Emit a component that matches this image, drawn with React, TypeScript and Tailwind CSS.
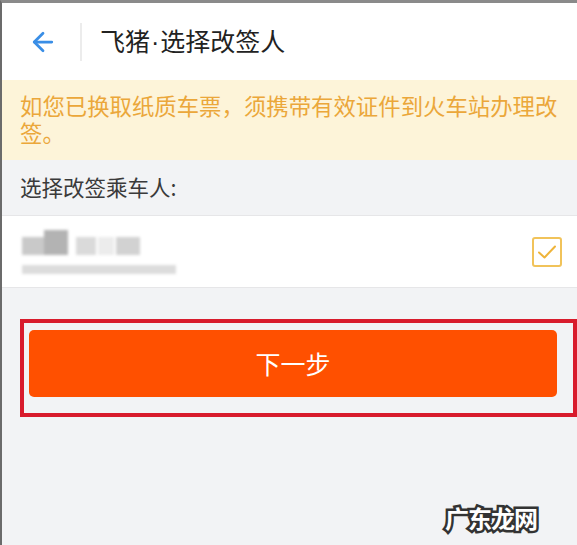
import { ArrowLeft } from "lucide-react";

const cjk = "font-['Noto_Sans_CJK_SC','Noto_Sans',sans-serif]";

const App = () => {
    return (
        <div
            className={`relative h-[545px] w-[577px] overflow-hidden bg-[#f2f3f5] border-l-2 border-t-[3px] border-l-[#6b6b6b] border-t-[#8a8a8a] ${cjk}`}
        >
            {/* header */}
            <div className="h-[77px] bg-white flex flex-row items-center">
                <div className="w-[78px] flex items-center justify-center pl-[4px]">
                    <ArrowLeft className="w-[30px] h-[30px] text-[#3a8ee6]" strokeWidth={2.2} />
                </div>
                <div className="h-[38px] w-[2px] bg-[#ececec]" />
                <div className="pl-[18px] text-[25px] leading-none text-[#222]">
                    飞猪<span className="font-['Liberation_Sans',sans-serif] px-[1px]">·</span>选择改签人
                </div>
            </div>

            {/* notice */}
            <div className="h-[80px] bg-[#fdf4d9] px-[18px] pt-[12px] text-[22.4px] leading-[27px] text-[#eba73a]">
                如您已换取纸质车票，须携带有效证件到火车站办理改签。
            </div>

            {/* label */}
            <div className="h-[55px] flex items-center px-[18px] text-[21.5px] text-[#3a3a3a]">
                选择改签乘车人:
            </div>

            {/* passenger row */}
            <div className="h-[73px] bg-white border-y border-[#e6e6e8] flex flex-row items-center justify-between pl-[20px] pr-[15px]">
                <div className="flex flex-col gap-[10px] blur-[1.5px]">
                    <div className="flex flex-row items-end gap-[8px]">
                        <div className="flex flex-row items-end">
                            <div className="w-[22px] h-[18px] bg-[#c9c9c9]" />
                            <div className="w-[24px] h-[25px] bg-[#b3b3b3]" />
                        </div>
                        <div className="flex flex-row gap-[2px]">
                            <div className="w-[20px] h-[18px] bg-[#dadada]" />
                            <div className="w-[16px] h-[18px] bg-[#ececec]" />
                            <div className="w-[24px] h-[18px] bg-[#d2d2d2]" />
                        </div>
                    </div>
                    <div className="w-[154px] h-[9px] bg-[#dcdcdc]" />
                </div>
                <div className="w-[30px] h-[30px] rounded-[3px] border-2 border-[#f1c35a] flex items-center justify-center">
                    <svg width="20" height="16" viewBox="0 0 20 16" fill="none">
                        <path d="M2 8.5 L7.5 13.5 L18 2.5" stroke="#efb43a" strokeWidth="2" strokeLinecap="round" strokeLinejoin="round" />
                    </svg>
                </div>
            </div>

            {/* button area */}
            <div className="pt-[31px] pl-[18px]">
                <div className="h-[98px] border-[4px] border-[#d81b2c] pl-[5px] pr-[18px] pt-[7px]">
                    <button className="w-[528px] h-[67px] rounded-[5px] bg-[#ff5000] text-white text-[25px] flex items-center justify-center">
                        下一步
                    </button>
                </div>
            </div>

            {/* watermark */}
            <div className="absolute left-[443px] top-[503px] text-[24px] font-bold leading-none text-white [-webkit-text-stroke:5px_#333] [paint-order:stroke_fill] tracking-[-1px]">
                广东龙网
            </div>
        </div>
    );
};

export default App;
